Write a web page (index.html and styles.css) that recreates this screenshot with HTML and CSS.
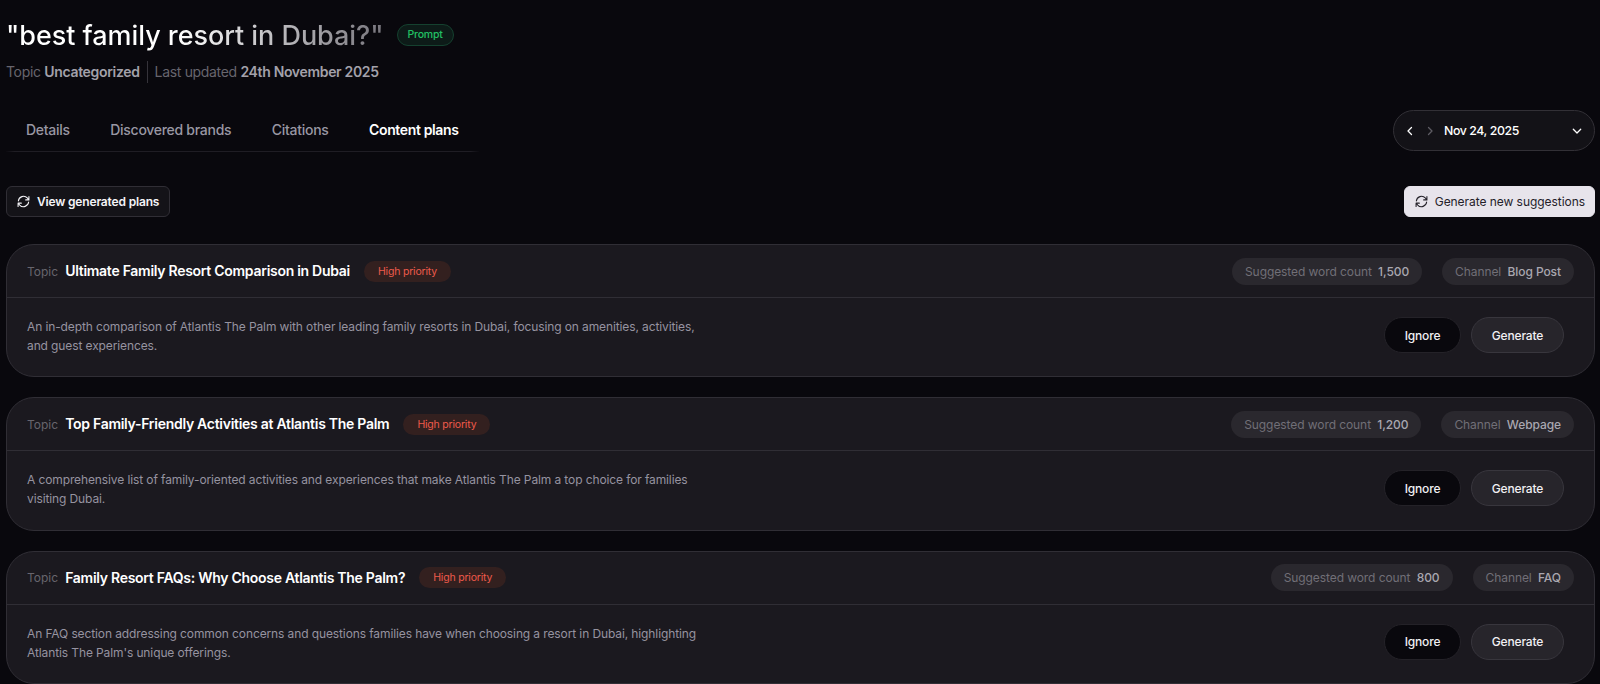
FILE: index.html
```html
<!DOCTYPE html>
<html lang="en">
<head>
    <meta charset="UTF-8">
    <meta name="viewport" content="width=device-width, initial-scale=1.0">
    <title>Content plans</title>
    <link rel="stylesheet" href="styles.css">
</head>
<body>
    <header class="header">
        <div class="title-row">
            <h1 class="title">"best family resort in Dubai?"</h1>
            <span class="badge-prompt">Prompt</span>
        </div>
        <div class="meta">
            <span class="meta-item">Topic <b>Uncategorized</b></span>
            <span class="meta-item">Last updated <b>24th November 2025</b></span>
        </div>
    </header>

    <div class="nav-row">
        <nav class="tabs">
            <a class="tab">Details</a>
            <a class="tab">Discovered brands</a>
            <a class="tab">Citations</a>
            <a class="tab active">Content plans</a>
        </nav>
        <div class="date-picker">
            <svg class="chevron" viewBox="0 0 10 10"><path d="M6.5 1.5 3 5l3.5 3.5"/></svg>
            <svg class="chevron disabled" viewBox="0 0 10 10"><path d="M3.5 1.5 7 5 3.5 8.5"/></svg>
            <span class="date">Nov 24, 2025</span>
            <svg class="chevron" viewBox="0 0 10 10"><path d="M1.3 3.3 5 7l3.7-3.7"/></svg>
        </div>
    </div>

    <div class="actions">
        <button class="btn btn-dark">
            <svg class="refresh" viewBox="0 0 24 24"><path d="M22 3v6h-6M2 21v-6h6M2.500 11a9.600 9.600 0 0 1 16.500-5.500L22 9M2 15l3 3.500A9.600 9.600 0 0 0 21.500 13"/></svg>
            View generated plans
        </button>
        <button class="btn btn-light">
            <svg class="refresh" viewBox="0 0 24 24"><path d="M22 3v6h-6M2 21v-6h6M2.500 11a9.600 9.600 0 0 1 16.500-5.500L22 9M2 15l3 3.500A9.600 9.600 0 0 0 21.500 13"/></svg>
            Generate new suggestions
        </button>
    </div>

    <main class="cards">
        <section class="card">
            <div class="card-header">
                <span class="label">Topic</span>
                <h2 class="card-title">Ultimate Family Resort Comparison in Dubai</h2>
                <span class="priority">High priority</span>
                <div class="chips">
                    <span class="chip">Suggested word count <b>1,500</b></span>
                    <span class="chip">Channel <b>Blog Post</b></span>
                </div>
            </div>
            <div class="card-body">
                <p class="description">An in-depth comparison of Atlantis The Palm with other leading family resorts in Dubai, focusing on amenities, activities, and guest experiences.</p>
                <div class="card-buttons">
                    <button class="pill ignore">Ignore</button>
                    <button class="pill generate">Generate</button>
                </div>
            </div>
        </section>
        <section class="card">
            <div class="card-header">
                <span class="label">Topic</span>
                <h2 class="card-title">Top Family-Friendly Activities at Atlantis The Palm</h2>
                <span class="priority">High priority</span>
                <div class="chips">
                    <span class="chip">Suggested word count <b>1,200</b></span>
                    <span class="chip">Channel <b>Webpage</b></span>
                </div>
            </div>
            <div class="card-body">
                <p class="description">A comprehensive list of family-oriented activities and experiences that make Atlantis The Palm a top choice for families visiting Dubai.</p>
                <div class="card-buttons">
                    <button class="pill ignore">Ignore</button>
                    <button class="pill generate">Generate</button>
                </div>
            </div>
        </section>
        <section class="card">
            <div class="card-header">
                <span class="label">Topic</span>
                <h2 class="card-title">Family Resort FAQs: Why Choose Atlantis The Palm?</h2>
                <span class="priority">High priority</span>
                <div class="chips">
                    <span class="chip">Suggested word count <b>800</b></span>
                    <span class="chip">Channel <b>FAQ</b></span>
                </div>
            </div>
            <div class="card-body">
                <p class="description">An FAQ section addressing common concerns and questions families have when choosing a resort in Dubai, highlighting Atlantis The Palm's unique offerings.</p>
                <div class="card-buttons">
                    <button class="pill ignore">Ignore</button>
                    <button class="pill generate">Generate</button>
                </div>
            </div>
        </section>
    </main>
</body>
</html>
```
FILE: styles.css
```css
* {
    box-sizing: border-box;
}
body {
    margin: 0;
    height: 684px;
    padding: 17px 5px 0 6px;
    overflow: hidden;
    background-color: #09080d;
    color: #fff;
    font-family: Inter, sans-serif;
}
button {
    font-family: inherit;
    cursor: pointer;
}
svg {
    fill: none;
    stroke: currentColor;
    stroke-linecap: round;
    stroke-linejoin: round;
    flex: none;
}
.header {
    height: 93px;
}
.title-row {
    display: flex;
    align-items: center;
    height: 36px;
}
.title {
    margin: 1px 0 0;
    font-size: 27px;
    font-weight: 500;
    line-height: 36px;
    letter-spacing: -0.05px;
    white-space: nowrap;
    background: linear-gradient(90deg, #fff 45%, #77757c);
    -webkit-background-clip: text;
    background-clip: text;
    color: transparent;
}
.badge-prompt {
    margin-left: 13px;
    padding: 0 10px;
    height: 22px;
    line-height: 20px;
    border: 1px solid #15412f;
    border-radius: 11px;
    background-color: #0d1b18;
    color: #22c064;
    font-size: 10.5px;
    font-weight: 500;
    letter-spacing: -0.2px;
}
.meta {
    display: flex;
    margin-top: 8px;
    color: #67656d;
    font-size: 14px;
    line-height: 22px;
    letter-spacing: -0.33px;
}
.meta-item + .meta-item {
    margin-left: 7px;
    padding-left: 7px;
    border-left: 1px solid #35333a;
}
.meta b {
    color: #a3a1aa;
    font-weight: 600;
}
.nav-row {
    display: flex;
    justify-content: space-between;
    height: 76px;
}
.tabs {
    display: flex;
    gap: 40.5px;
    height: 42px;
    padding: 0 20px;
    border-bottom: 1px solid;
    border-image: linear-gradient(90deg, transparent, #1f1d24 2%, #1f1d24 98%, transparent) 1;
}
.tab {
    color: #9997a3;
    font-size: 14px;
    font-weight: 500;
    line-height: 40px;
    letter-spacing: -0.28px;
}
.tab.active {
    color: #fff;
    font-weight: 600;
    letter-spacing: -0.36px;
}
.date-picker {
    display: flex;
    align-items: center;
    width: 202px;
    height: 41px;
    padding: 0 12px 0 11px;
    border: 1px solid #323036;
    border-radius: 21px;
    background-color: #131217;
}
.chevron {
    width: 10px;
    height: 10px;
    stroke-width: 1.3;
}
.chevron.disabled {
    margin: 0 9px 0 10px;
    color: #5e5c63;
}
.date {
    flex: 1;
    font-size: 12.3px;
    font-weight: 500;
    letter-spacing: -0.38px;
}
.actions {
    display: flex;
    justify-content: space-between;
    height: 58px;
}
.btn {
    display: flex;
    align-items: center;
    gap: 7px;
    height: 31px;
    padding: 0 10px 1px;
    border: 1px solid #302e35;
    border-radius: 6px;
    font-size: 12px;
}
.btn-dark {
    background-color: #141318;
    color: #f4f3f7;
    font-weight: 600;
    letter-spacing: -0.17px;
}
.btn-light {
    padding-right: 9px;
    border-color: #e7e4eb;
    background-color: #e7e4eb;
    color: #242129;
    font-weight: 400;
    letter-spacing: -0.05px;
}
.refresh {
    width: 13px;
    height: 13px;
    stroke-width: 2;
}
.cards {
    display: flex;
    flex-direction: column;
    gap: 20.2px;
}
.card {
    height: 133.2px;
    flex: none;
    border: 1px solid #302e35;
    border-radius: 28px;
    background-color: #1b191f;
}
.card-header {
    display: flex;
    align-items: center;
    height: 53px;
    padding: 0 20px;
    border-bottom: 1px solid #302e35;
}
.label {
    color: #67656d;
    font-size: 12px;
}
.card-title {
    margin: 0 14px 1px 7px;
    font-size: 14px;
    font-weight: 600;
    letter-spacing: -0.28px;
}
.priority {
    padding: 0 14px;
    border-radius: 11px;
    background-color: #33201f;
    color: #ee5a4b;
    font-size: 10.5px;
    line-height: 21px;
    letter-spacing: -0.2px;
}
.chips {
    display: flex;
    gap: 20px;
    margin-left: auto;
}
.chip {
    padding: 0 13px;
    border-radius: 14px;
    background-color: #2a282e;
    color: #716f77;
    font-size: 12px;
    line-height: 27px;
    letter-spacing: -0.08px;
}
.chip b {
    margin-left: 3px;
    color: #a9a7b0;
    font-weight: 500;
}
.card-body {
    display: flex;
    align-items: flex-start;
    justify-content: space-between;
    padding: 19px 30px 0 20px;
}
.description {
    width: 680px;
    margin: 0;
    color: #9693a0;
    font-size: 12px;
    line-height: 19px;
    letter-spacing: -0.11px;
}
.card-buttons {
    display: flex;
    gap: 10px;
}
.pill {
    height: 36px;
    border: 1px solid #302e35;
    border-radius: 18px;
    color: #f1f0f4;
    font-size: 12px;
    font-weight: 500;
    letter-spacing: -0.15px;
}
.ignore {
    width: 77px;
    border-color: #242228;
    background-color: #09080d;
}
.generate {
    width: 93px;
    border-color: #38363d;
    background-color: #27252b;
}
```
